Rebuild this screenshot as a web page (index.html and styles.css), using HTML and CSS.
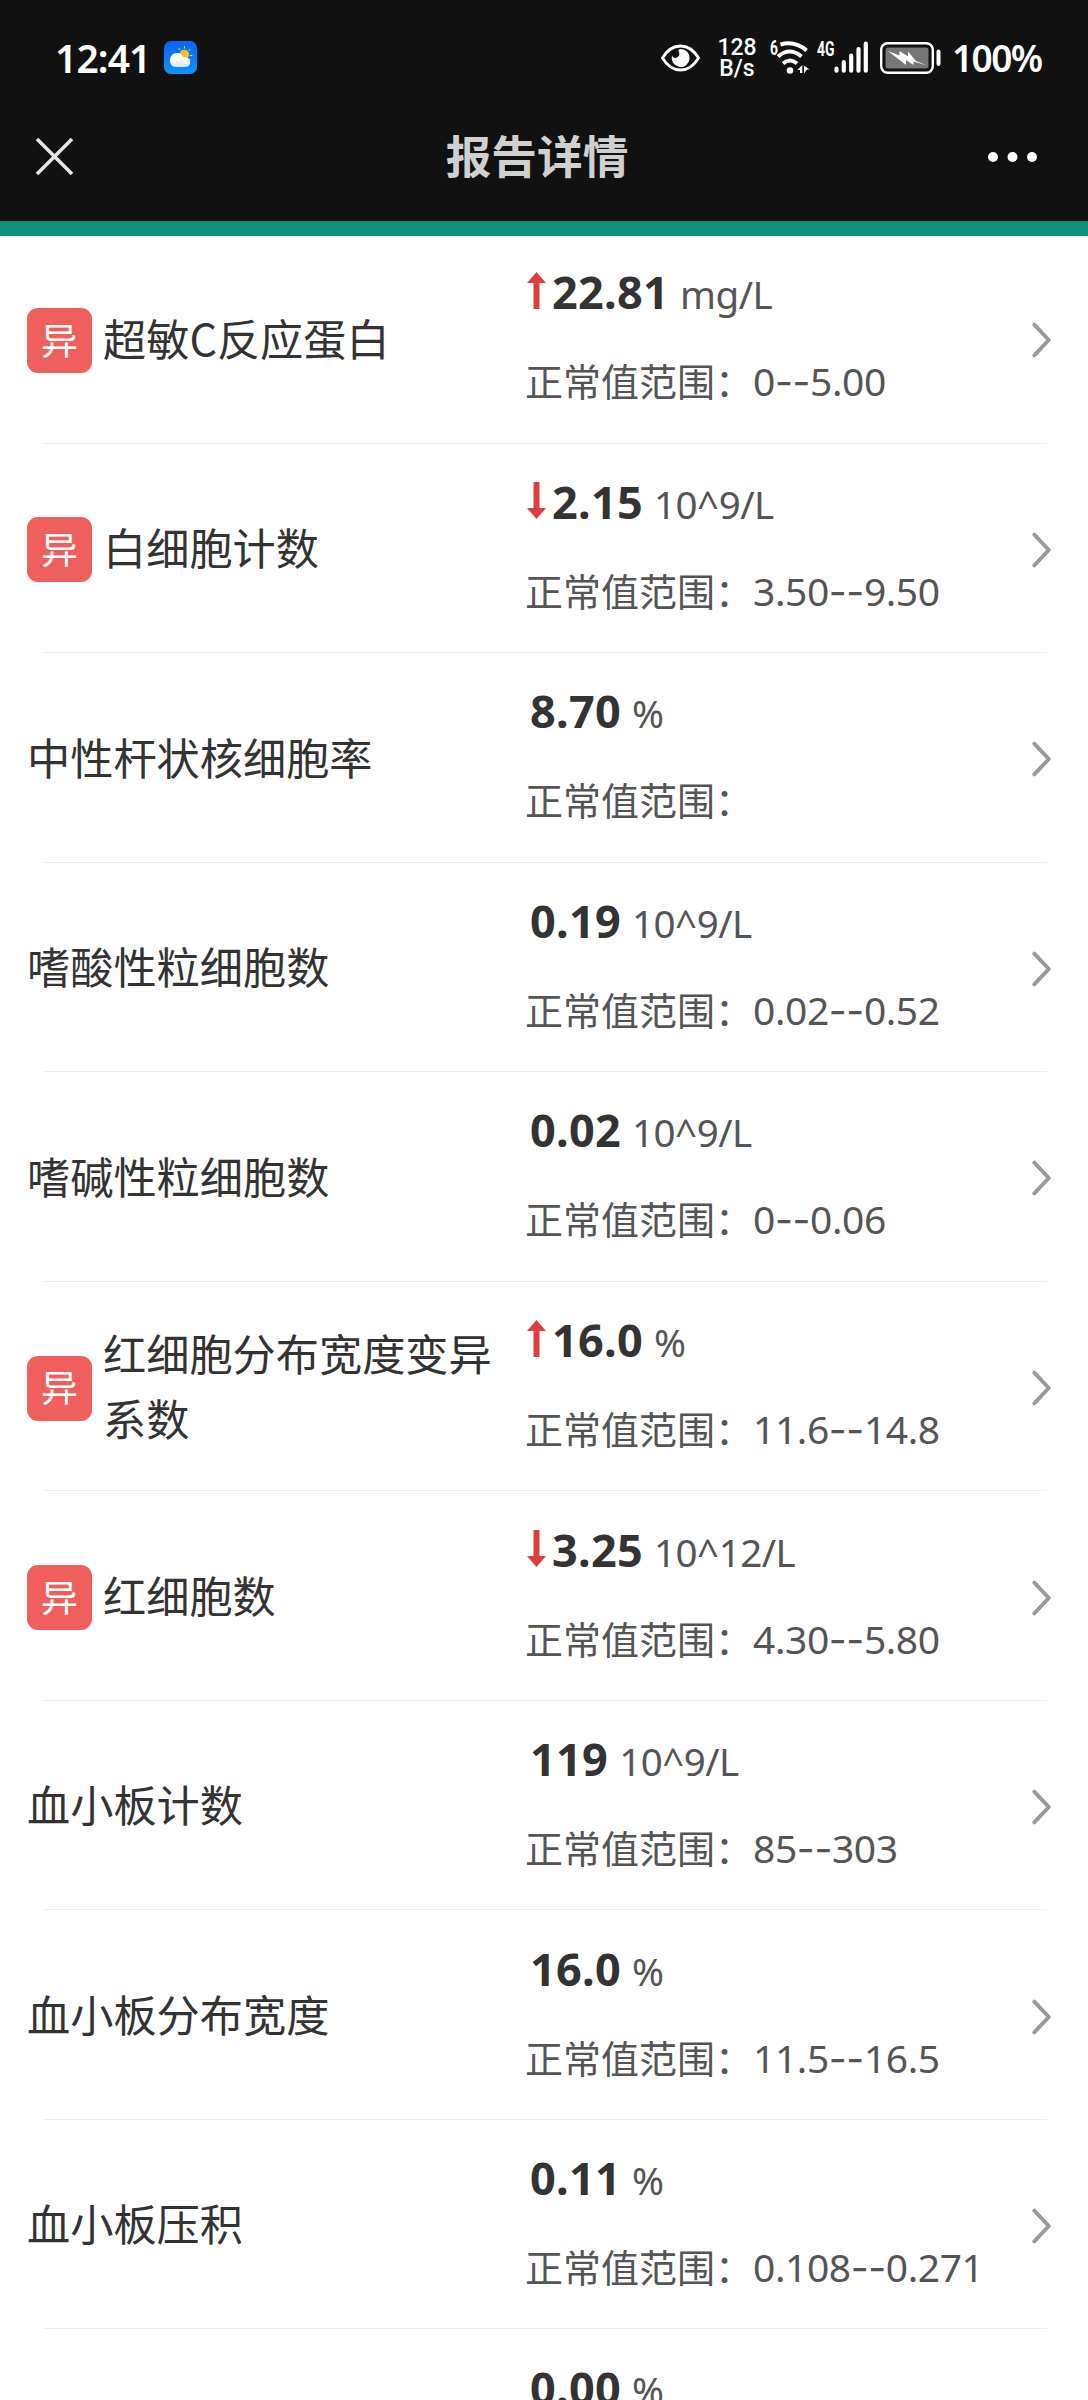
FILE: index.html
```html
<!DOCTYPE html>
<html lang="zh-CN">
<head>
  <meta charset="UTF-8">
  <meta name="viewport" content="width=device-width, initial-scale=1.0">
  <title>报告详情</title>
  <link rel="stylesheet" href="styles.css">
</head>
<body>
  <svg class="sprite">
    <symbol id="up" viewBox="0 0 19 37"><path d="M9.5 0L19 11H12.5V37H6.5V11H0z"/></symbol>
    <symbol id="down" viewBox="0 0 19 37"><path d="M9.5 37L19 26H12.5V0H6.5V26H0z"/></symbol>
    <symbol id="next" viewBox="0 0 20 36"><path d="M2.3 2.6L16.8 18L2.3 33.4" fill="none" stroke="#999" stroke-width="3.8" stroke-linecap="round" stroke-linejoin="round"/></symbol>
  </svg>

  <header>
    <div class="status">
      <span class="time">12:41</span>
      <svg class="weather" width="33" height="33" viewBox="0 0 33 33">
        <defs>
          <linearGradient id="sky" x2="0" y2="1"><stop stop-color="#0a63f2"/><stop offset="1" stop-color="#0a92ff"/></linearGradient>
          <linearGradient id="cloud" x2="0" y2="1"><stop offset=".4" stop-color="#fff"/><stop offset="1" stop-color="#cfe6fb"/></linearGradient>
        </defs>
        <rect width="33" height="33" rx="7" fill="url(#sky)"/>
        <path d="M20.500 5v2.500M14.500 7l1.500 2M26.500 8l-1.600 1.700M25.800 14.500h2.600M24.800 18l1.800 1" stroke="#ffd23c" stroke-width="1"/>
        <circle cx="20.300" cy="13.400" r="4.700" fill="#ffc421"/>
        <path d="M11.500 26a5.700 6 0 0 1-5.500-6.500c0-4.500 3-7.500 7-7.500 3.300 0 5.400 2 6.200 4.300 4-.6 7 1.300 7 4.900 0 3-2 4.800-5 4.800z" fill="url(#cloud)"/>
      </svg>
      <div class="status-right">
        <svg class="eye" width="39" height="28" viewBox="0 0 39 28">
          <path d="M1.500 14C11-2 28-2 37.500 14C28 30 11 30 1.500 14z" fill="none" stroke="#fff" stroke-width="2.800"/>
          <path d="M19.500 5a9 9 0 1 1-8.500 6.500c1 2 3.200 3 5 2 2.600-1.400 3-4 1.500-6.500-.5-1 .7-2 2-2z" fill="#fff"/>
        </svg>
        <div class="speed"><span>128</span><span>B/s</span></div>
        <svg class="wifi" width="40" height="38" viewBox="0 0 40 38">
          <text x="0" y="15.500" class="tiny" textLength="8" lengthAdjust="spacingAndGlyphs">6</text>
          <g fill="none" stroke="#fff" stroke-width="4">
            <path d="M10.500 5.500Q25 1.500 36.500 11.500"/>
            <path d="M8 17.500Q19.500 7.500 31.500 17.500"/>
            <path d="M13 24.500Q20 18.500 27 24.500"/>
          </g>
          <circle cx="20" cy="31.500" r="3.300" fill="#fff"/>
          <path d="M27.300 31L32.300 26V34H30V31zM34 26.500L39.500 30.500H37L34 34.500z" fill="#fff"/>
        </svg>
        <svg class="signal" width="53" height="36" viewBox="0 0 53 36">
          <text x="0" y="15.500" class="tiny" textLength="17.500" lengthAdjust="spacingAndGlyphs">4G</text>
          <path d="M19.500 28.500v2.200M26.800 22v8.700M34.200 15.500v15.200M41.500 9v21.700M48.800 3.500v27.200" stroke="#fff" stroke-width="4.200" stroke-linecap="round"/>
        </svg>
        <svg class="battery" width="62" height="32" viewBox="0 0 62 32">
          <rect x="1.200" y="1.200" width="51.600" height="29.600" rx="6.500" fill="none" stroke="#fff" stroke-width="2.400"/>
          <rect x="5.500" y="5.500" width="43" height="21" rx="2.500" fill="#777"/>
          <path d="M8 9L19.500 13.500V9L28 14.500V9.500L36 19L47 23.500L33.500 19.500V23L26 18V23z" fill="#fff"/>
          <rect x="56.500" y="7.500" width="4" height="16.500" rx="2" fill="#fff"/>
        </svg>
        <span class="percent">100%</span>
      </div>
    </div>
    <nav>
      <svg class="close" width="39" height="39" viewBox="0 0 39 39"><path d="M2 2L37 37M37 2L2 37" stroke="#e6e6e6" stroke-width="3.600"/></svg>
      <h1>报告详情</h1>
      <svg class="more" width="50" height="10" viewBox="0 0 50 10" fill="#fff"><circle cx="5" cy="5" r="5"/><circle cx="24.500" cy="5" r="5"/><circle cx="44" cy="5" r="5"/></svg>
    </nav>
  </header>

  <main>
    <div class="item abnormal">
      <div class="name"><i class="badge">异</i><span>超敏C反应蛋白</span></div>
      <div class="data">
        <div class="value"><svg class="arrow"><use href="#up"/></svg><b>22.81</b><span>mg/L</span></div>
        <div class="range">正常值范围：<span>0<em>--</em>5.00</span></div>
      </div>
      <svg class="next"><use href="#next"/></svg>
    </div>
    <div class="item abnormal">
      <div class="name"><i class="badge">异</i><span>白细胞计数</span></div>
      <div class="data">
        <div class="value"><svg class="arrow"><use href="#down"/></svg><b>2.15</b><span>10^9/L</span></div>
        <div class="range">正常值范围：<span>3.50<em>--</em>9.50</span></div>
      </div>
      <svg class="next"><use href="#next"/></svg>
    </div>
    <div class="item">
      <div class="name"><span>中性杆状核细胞率</span></div>
      <div class="data">
        <div class="value"><b>8.70</b><span>%</span></div>
        <div class="range">正常值范围：</div>
      </div>
      <svg class="next"><use href="#next"/></svg>
    </div>
    <div class="item">
      <div class="name"><span>嗜酸性粒细胞数</span></div>
      <div class="data">
        <div class="value"><b>0.19</b><span>10^9/L</span></div>
        <div class="range">正常值范围：<span>0.02<em>--</em>0.52</span></div>
      </div>
      <svg class="next"><use href="#next"/></svg>
    </div>
    <div class="item">
      <div class="name"><span>嗜碱性粒细胞数</span></div>
      <div class="data">
        <div class="value"><b>0.02</b><span>10^9/L</span></div>
        <div class="range">正常值范围：<span>0<em>--</em>0.06</span></div>
      </div>
      <svg class="next"><use href="#next"/></svg>
    </div>
    <div class="item abnormal">
      <div class="name"><i class="badge">异</i><span>红细胞分布宽度变异系数</span></div>
      <div class="data">
        <div class="value"><svg class="arrow"><use href="#up"/></svg><b>16.0</b><span>%</span></div>
        <div class="range">正常值范围：<span>11.6<em>--</em>14.8</span></div>
      </div>
      <svg class="next"><use href="#next"/></svg>
    </div>
    <div class="item abnormal">
      <div class="name"><i class="badge">异</i><span>红细胞数</span></div>
      <div class="data">
        <div class="value"><svg class="arrow"><use href="#down"/></svg><b>3.25</b><span>10^12/L</span></div>
        <div class="range">正常值范围：<span>4.30<em>--</em>5.80</span></div>
      </div>
      <svg class="next"><use href="#next"/></svg>
    </div>
    <div class="item">
      <div class="name"><span>血小板计数</span></div>
      <div class="data">
        <div class="value"><b>119</b><span>10^9/L</span></div>
        <div class="range">正常值范围：<span>85<em>--</em>303</span></div>
      </div>
      <svg class="next"><use href="#next"/></svg>
    </div>
    <div class="item">
      <div class="name"><span>血小板分布宽度</span></div>
      <div class="data">
        <div class="value"><b>16.0</b><span>%</span></div>
        <div class="range">正常值范围：<span>11.5<em>--</em>16.5</span></div>
      </div>
      <svg class="next"><use href="#next"/></svg>
    </div>
    <div class="item">
      <div class="name"><span>血小板压积</span></div>
      <div class="data">
        <div class="value"><b>0.11</b><span>%</span></div>
        <div class="range">正常值范围：<span>0.108<em>--</em>0.271</span></div>
      </div>
      <svg class="next"><use href="#next"/></svg>
    </div>
    <div class="item">
      <div class="name"></div>
      <div class="data">
        <div class="value"><b>0.00</b><span>%</span></div>
        <div class="range"></div>
      </div>
    </div>
  </main>
</body>
</html>
```
FILE: styles.css
```css
* {
  box-sizing: border-box;
}
body {
  margin: 0;
  width: 1088px;
  height: 2400px;
  overflow: hidden;
  background-color: #fff;
  color: #333;
  font-family: "Noto Sans", "Noto Sans CJK SC", sans-serif;
  display: flex;
  flex-direction: column;
}
.sprite {
  display: none;
}
svg {
  display: block;
  flex-shrink: 0;
  overflow: visible;
}
header {
  flex-shrink: 0;
  height: 236px;
  background-color: #111;
  border-bottom: 15px solid #0d927a;
}
.status {
  display: flex;
  align-items: center;
  height: 115px;
  padding: 0 48px 0 55px;
  color: #fff;
}
.time {
  width: 109px;
  padding-bottom: 1px;
  font-size: 39px;
  font-weight: 600;
  letter-spacing: -.9px;
}
.status-right {
  display: flex;
  align-items: center;
  margin-left: auto;
}
.speed {
  display: flex;
  flex-direction: column;
  align-items: center;
  width: 38px;
  margin: 0 14px 0 18px;
  font: 500 23px/21px Roboto, sans-serif;
}
.tiny {
  font: 700 19.5px Roboto, sans-serif;
  fill: #fff;
}
.wifi {
  margin-right: 7px;
}
.signal {
  margin-right: 10px;
}
.battery {
  margin-right: 10px;
}
.percent {
  width: 88px;
  padding-bottom: 1px;
  font-size: 37px;
  font-weight: 600;
  letter-spacing: -1.6px;
}
nav {
  display: flex;
  align-items: center;
  justify-content: space-between;
  height: 83px;
  padding: 0 50px 0 35px;
}
h1 {
  margin: 0 0 0 12px;
  padding-bottom: 5px;
  color: #d0d0d0;
  font: 700 45.7px/60px "Noto Sans CJK SC", sans-serif;
}
main {
  flex: 1;
  margin-top: -2px;
  overflow: hidden;
}
.item {
  display: flex;
  align-items: center;
  height: 209.55px;
  padding: 3px 36px 0 27px;
  background: linear-gradient(#eee, #eee) 43px 100% / 1004px 1px no-repeat;
}
.name {
  display: flex;
  align-items: center;
  width: 498px;
  font: 43.2px/65.5px "Noto Sans CJK SC", sans-serif;
}
.name span {
  width: 400px;
  padding-bottom: 6px;
}
.badge {
  display: flex;
  align-items: center;
  justify-content: center;
  width: 65px;
  height: 65px;
  margin-right: 11px;
  padding-bottom: 2px;
  border-radius: 11px;
  background-color: #ee5f5e;
  color: #fff;
  font-size: 37px;
  font-style: normal;
}
.data {
  flex: 1;
  padding-bottom: 8px;
}
.value {
  display: flex;
  align-items: baseline;
  height: 80px;
  margin-bottom: 8px;
  padding-left: 5px;
  line-height: 80px;
}
.abnormal .value {
  padding-left: 2px;
}
.arrow {
  width: 19px;
  height: 37px;
  margin-right: 6px;
  fill: #dc3f3d;
}
.value b {
  font-size: 45px;
  letter-spacing: .3px;
}
.value span {
  margin-left: 11px;
  color: #555;
  font-size: 38.5px;
  letter-spacing: -.5px;
}
.range {
  height: 80px;
  color: #555;
  font: 38px/80px "Noto Sans CJK SC", sans-serif;
}
.range span {
  font-family: "Noto Sans", sans-serif;
  font-size: 39px;
  letter-spacing: -.4px;
}
.range em {
  font-family: Inter, sans-serif;
  font-style: normal;
}
.next {
  width: 20px;
  height: 36px;
}
```
